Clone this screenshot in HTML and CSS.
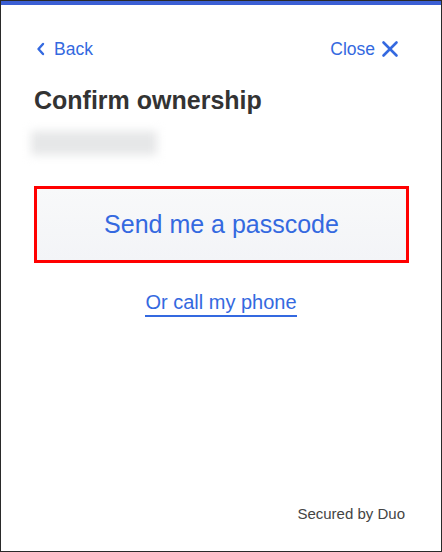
FILE: index.html
```html
<!DOCTYPE html>
<html lang="en">
  <head>
    <meta charset="UTF-8" />
    <title>Confirm ownership</title>
    <meta name="viewport" content="width=device-width, initial-scale=1.0" />
    <link rel="stylesheet" href="styles.css">
  </head>
  <body>
    <div class="frame">
      <div class="top-bar"></div>

      <div class="content">
        <!-- NAV: back / close -->
        <div class="nav-row">
          <a class="nav-link" href="#">
            <svg width="10" height="14" viewBox="0 0 10 14" fill="none" stroke="currentColor" stroke-width="2.4" stroke-linecap="round" stroke-linejoin="round">
              <path d="M7 2L2.5 7L7 12"/>
            </svg>
            <span>Back</span>
          </a>
          <a class="nav-link" href="#">
            <span>Close</span>
            <svg width="18" height="18" viewBox="0 0 18 18" fill="none" stroke="currentColor" stroke-width="2.6" stroke-linecap="round">
              <line x1="2.5" y1="2.5" x2="15.5" y2="15.5"/>
              <line x1="15.5" y1="2.5" x2="2.5" y2="15.5"/>
            </svg>
          </a>
        </div>

        <h1 class="title">Confirm ownership</h1>
        <div class="masked-number"></div>

        <!-- ACTIONS -->
        <div class="highlight">
          <button class="passcode-btn" type="button">Send me a passcode</button>
        </div>
        <div class="alt-row">
          <a class="call-link" href="#">Or call my phone</a>
        </div>
      </div>

      <div class="footer">Secured by Duo</div>
    </div>
  </body>
</html>
```

FILE: styles.css
```css
/* RESET */
* {
  margin: 0;
  padding: 0;
  box-sizing: border-box;
}
:root {
  --link-color: #3469e0;
  --text-dark: #333333;
}

body {
  font-family: "Liberation Sans", Arial, sans-serif;
  background: #fff;
}

/* FRAME: full window with dark outline */
.frame {
  width: 442px;
  height: 552px;
  border: 1px solid #2a2a2a;
  display: flex;
  flex-direction: column;
}
.top-bar {
  height: 4px;
  background: #3b5fd4;
}

.content {
  flex: 1;
  padding: 0 33px 0 33px;
}

/* NAV ROW */
.nav-row {
  display: flex;
  justify-content: space-between;
  align-items: center;
  margin-top: 32px;
  height: 24px;
}
.nav-link {
  display: flex;
  align-items: center;
  gap: 8px;
  color: var(--link-color);
  text-decoration: none;
  font-size: 17.5px;
}
.nav-link:first-child {
  padding-left: 2px;
}
.nav-link:last-child {
  gap: 6px;
  padding-right: 9px;
}

.title {
  font-size: 25px;
  font-weight: 700;
  color: var(--text-dark);
  margin-top: 25px;
  line-height: 28px;
}

/* Blurred phone number */
.masked-number {
  width: 126px;
  height: 24px;
  margin-top: 17px;
  margin-left: -3px;
  background: #e6e7e8;
  filter: blur(5px);
}

/* Highlighted passcode button */
.highlight {
  margin-top: 31px;
  width: 375px;
  border: 3px solid #ff0000;
}
.passcode-btn {
  display: block;
  width: 100%;
  height: 71px;
  border: none;
  background: linear-gradient(#f8f9fa, #f3f4f7);
  color: var(--link-color);
  font-family: inherit;
  font-size: 25px;
  cursor: pointer;
}

.alt-row {
  text-align: center;
  margin-top: 28px;
}
.call-link {
  color: var(--link-color);
  font-size: 20px;
  text-decoration: none;
  border-bottom: 2px solid var(--link-color);
  padding-bottom: 2px;
}

.footer {
  text-align: right;
  font-size: 15px;
  color: #444;
  padding: 0 36px 29px 0;
}
```
